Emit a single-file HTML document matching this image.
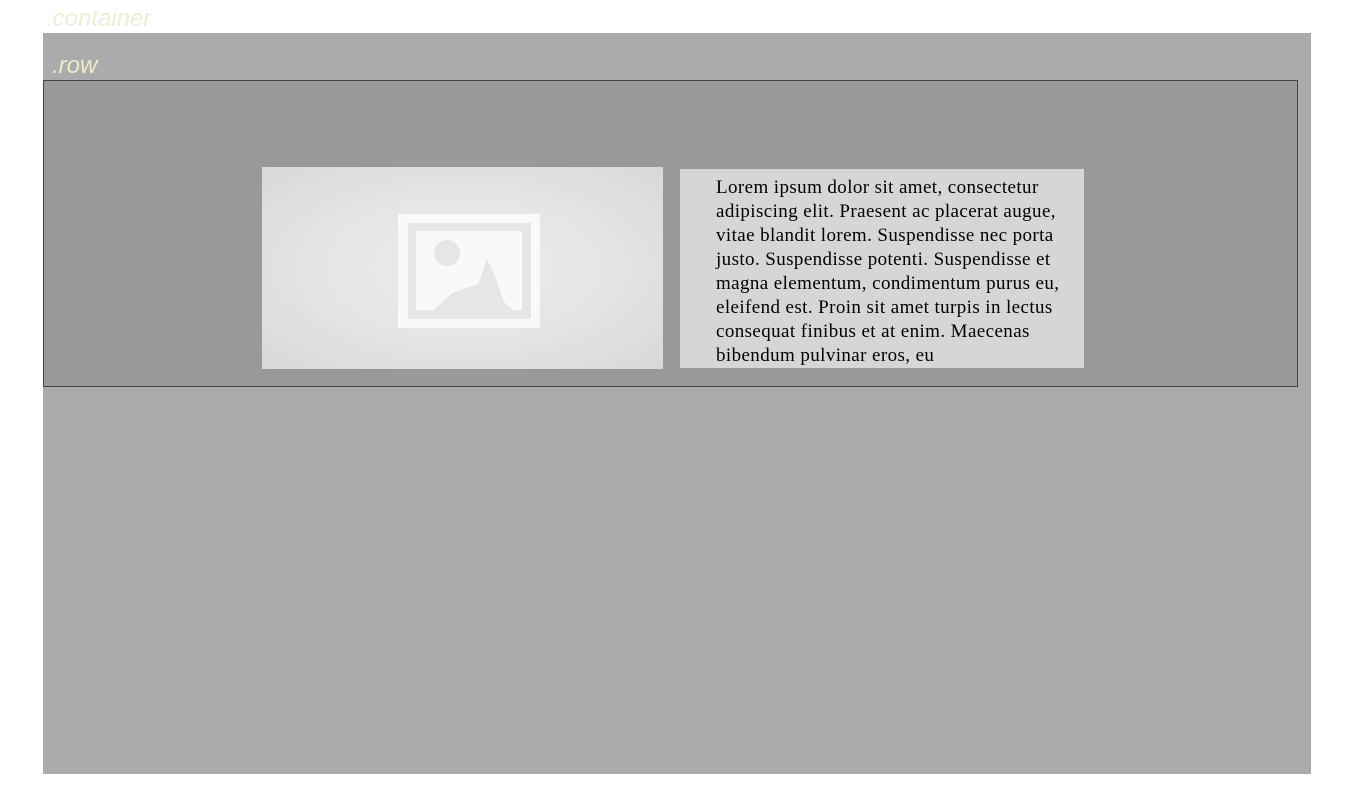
<!DOCTYPE html>
<html><head><meta charset="utf-8"><style>
html,body{margin:0;padding:0;background:#fff;width:1346px;height:811px;overflow:hidden;position:relative}
.lbl{position:absolute;font-family:"Liberation Sans",sans-serif;font-style:italic;color:#ecebd0;font-size:24px;line-height:1}
#cont{position:absolute;left:43px;top:33px;width:1268px;height:741px;background:#ababab}
#row{position:absolute;left:43px;top:80px;width:1253px;height:305px;background:#999;border:1px solid #444}
#img{position:absolute;left:262px;top:167px;width:401px;height:202px;background:radial-gradient(ellipse at center,#ececec 0%,#e5e5e5 50%,#d8d8d8 100%)}
#txt{position:absolute;left:680px;top:169px;width:404px;height:199px;background:#d6d6d6;box-sizing:border-box;padding:7px 0 0 36px;font-family:"Liberation Serif",serif;font-size:19px;letter-spacing:0.4px;line-height:24px;color:#000;white-space:nowrap}
</style></head><body>
<div class="lbl" style="left:46px;top:7px;color:#efeed8">.container</div>
<div id="cont"></div>
<div class="lbl" style="left:52px;top:54px">.row</div>
<div id="row"></div>
<div id="img">
<svg width="401" height="202" style="position:absolute;left:0;top:0">
<g transform="translate(-262,-167)">
<rect x="398" y="214" width="142" height="114" fill="#f9f9f9"/>
<rect x="408" y="223" width="123" height="96" fill="#e6e6e6"/>
<rect x="416" y="231" width="106" height="79" fill="#f9f9f9"/>
<circle cx="447" cy="253" r="13" fill="#e6e6e6"/>
<path d="M434 310 L452 293 L478 284 L487 259 L495 276 L504 302 L513 310 Z" fill="#e6e6e6"/>
</g></svg>
</div>
<div id="txt">Lorem ipsum dolor sit amet, consectetur<br>adipiscing elit. Praesent ac placerat augue,<br>vitae blandit lorem. Suspendisse nec porta<br>justo. Suspendisse potenti. Suspendisse et<br>magna elementum, condimentum purus eu,<br>eleifend est. Proin sit amet turpis in lectus<br>consequat finibus et at enim. Maecenas<br>bibendum pulvinar eros, eu</div>
</body></html>
